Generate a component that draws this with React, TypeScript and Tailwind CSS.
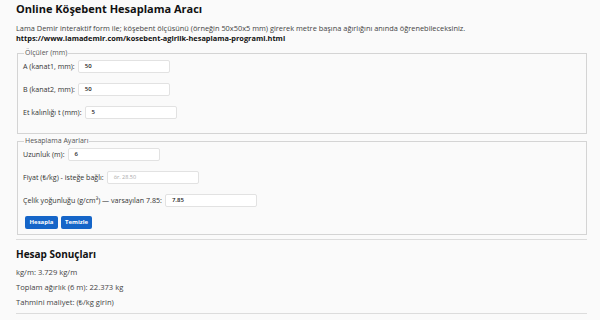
import React from 'react';

const Field: React.FC<{ label: string; value?: string; placeholder?: string }> = ({ label, value, placeholder }) => {
  return (
    <div className="flex items-center h-[13px] gap-[3px]">
      <span className="text-[7.1px] text-[#333] whitespace-nowrap">{label}</span>
      <div className="w-[92px] shrink-0 h-[13px] bg-white border border-[#e2e2e2] rounded-[2px] flex items-center px-[6px]">
        {value ? (
          <span className="text-[6px] font-semibold text-[#222]">{value}</span>
        ) : (
          <span className="text-[5.5px] text-[#aaa]">{placeholder}</span>
        )}
      </div>
    </div>
  );
};

const App: React.FC = () => {
  return (
    <div className="w-[600px] h-[320px] overflow-hidden bg-[#fafafa] px-[16px] text-[#333]" style={{ fontFamily: '"Open Sans", "Noto Sans", sans-serif' }}>
      <h1 className="pt-[2px] text-[11px] font-bold text-[#111] leading-[14px]">Online Köşebent Hesaplama Aracı</h1>

      <p className="mt-[7px] text-[7.4px] leading-[10px] text-[#444] whitespace-nowrap">
        Lama Demir interaktif form ile; köşebent ölçüsünü (örneğin 50x50x5 mm) girerek metre başına ağırlığını anında öğrenebileceksiniz.
      </p>
      <p className="text-[7.4px] leading-[10px] font-bold text-[#111]">https://www.lamademir.com/kosebent-agirlik-hesaplama-programi.html</p>

      {/* Ölçüler */}
      <fieldset className="mt-[6px] ml-[1px] w-[570px] h-[85px] border border-[#d4d4d4] px-[5px] pt-[3px]">
        <legend className="ml-[1px] px-[1px] text-[7px] text-[#555] leading-[8px]">Ölçüler (mm)</legend>
        <div className="flex flex-col gap-[10px]">
          <Field label="A (kanat1, mm):" value="50" />
          <Field label="B (kanat2, mm):" value="50" />
          <Field label="Et kalınlığı t (mm):" value="5" />
        </div>
      </fieldset>

      {/* Hesaplama Ayarları */}
      <fieldset className="mt-[3px] ml-[1px] w-[570px] h-[98px] border border-[#d4d4d4] px-[5px] pt-[3px]">
        <legend className="ml-[1px] px-[1px] text-[7px] text-[#555] leading-[8px]">Hesaplama Ayarları</legend>
        <div className="flex flex-col gap-[10px]">
          <Field label="Uzunluk (m):" value="6" />
          <Field label="Fiyat (₺/kg) - isteğe bağlı:" placeholder="ör. 28.50" />
          <Field label="Çelik yoğunluğu (g/cm³) — varsayılan 7.85:" value="7.85" />
        </div>
        <div className="mt-[9px] ml-[2px] flex gap-[3px]">
          <button className="h-[13px] w-[33px] rounded-[2px] bg-[#1565c8] text-white text-[6px] font-bold">Hesapla</button>
          <button className="h-[13px] w-[31px] rounded-[2px] bg-[#1565c8] text-white text-[6px] font-bold">Temizle</button>
        </div>
      </fieldset>

      <div className="mt-[4px] w-[571px] h-[1px] bg-[#dcdcdc]" />

      <h2 className="mt-[8px] text-[10px] font-bold text-[#111] leading-[13px]">Hesap Sonuçları</h2>
      <div className="mt-[7px] flex flex-col gap-[7px] text-[7.6px] leading-[8px] text-[#444]">
        <p>kg/m: 3.729 kg/m</p>
        <p>Toplam ağırlık (6 m): 22.373 kg</p>
        <p>Tahmini maliyet: (₺/kg girin)</p>
      </div>
      <div className="mt-[7px] w-[571px] h-[1px] bg-[#dcdcdc]" />
    </div>
  );
};

export default App;
